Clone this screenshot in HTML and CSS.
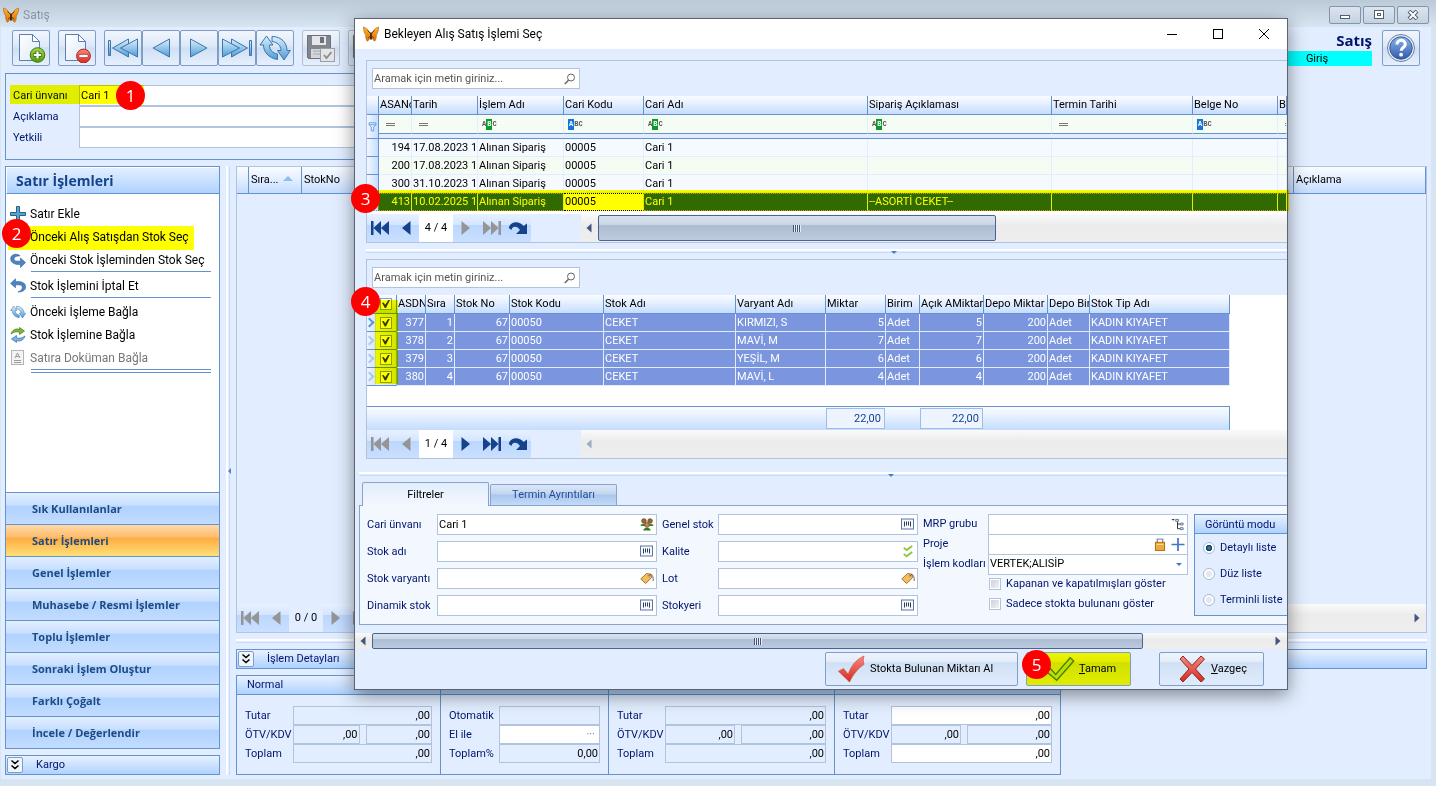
FILE: index.html
```html
<!DOCTYPE html>
<html lang="tr">
<head>
  <meta charset="UTF-8">
  <meta name="viewport" content="width=device-width, initial-scale=1.0">
  <title>Satış</title>
  <link rel="stylesheet" href="styles.css">
</head>
<body>
<svg class="defs" width="0" height="0" aria-hidden="true">
  <defs>
    <linearGradient id="gBlue" x1="0" y1="0" x2="0" y2="1"><stop offset="0" stop-color="#d9f1fb"/><stop offset="1" stop-color="#4f9bd6"/></linearGradient>
    <linearGradient id="gWing" x1="0" y1="0" x2="0" y2="1"><stop offset="0" stop-color="#ffb52e"/><stop offset="1" stop-color="#d9720c"/></linearGradient>
    <linearGradient id="gRed" x1="0" y1="0" x2="0" y2="1"><stop offset="0" stop-color="#f58a80"/><stop offset="1" stop-color="#d8291f"/></linearGradient>
    <linearGradient id="gGreen" x1="0" y1="0" x2="0" y2="1"><stop offset="0" stop-color="#a4d64a"/><stop offset="1" stop-color="#4e9a12"/></linearGradient>
    <linearGradient id="gHelp" x1="0" y1="0" x2="0" y2="1"><stop offset="0" stop-color="#8fb4ea"/><stop offset="1" stop-color="#2c5cae"/></linearGradient>
    <linearGradient id="gPage" x1="0" y1="0" x2="1" y2="1"><stop offset="0" stop-color="#ffffff"/><stop offset="1" stop-color="#dde9f8"/></linearGradient>
  </defs>
  <symbol id="butterfly" viewBox="0 0 16 16">
    <path d="M7.500 8C6.500 5 3.500 1.500 .4 1C.3 3.500 1.200 7.500 2.800 9C2.300 10.500 2.800 13 4.200 15.200C5.800 14.500 7.200 12.500 7.700 10z" fill="url(#gWing)" stroke="#9a560c" stroke-width=".5"/>
    <path d="M8.500 8C9.500 5 12.500 1.500 15.600 1C15.700 3.500 14.800 7.500 13.200 9C13.700 10.500 13.200 13 11.800 15.200C10.200 14.500 8.800 12.500 8.300 10z" fill="url(#gWing)" stroke="#9a560c" stroke-width=".5"/>
    <path d="M8 6.500v7" stroke="#3a1d03" stroke-width="1.800"/>
    <path d="M8 8L4.500 4.500M8 8l3.500-3.500M8 9.500L5 12M8 9.500l3 2.500" stroke="#6b3806" stroke-width=".9" fill="none"/>
  </symbol>
  <symbol id="page" viewBox="0 0 30 30">
    <path d="M3.500 1.500h13l7 7v19h-20z" fill="url(#gPage)" stroke="#5c7db5"/>
    <path d="M16.500 1.500l7 7h-7z" fill="#fff" stroke="#5c7db5"/>
  </symbol>
  <symbol id="pageAdd" viewBox="0 0 30 30">
    <use href="#page"/>
    <circle cx="21.500" cy="22" r="7.300" fill="url(#gGreen)" stroke="#3f7a10"/>
    <path d="M21.500 18v8M17.500 22h8" stroke="#3f7a10" stroke-width="4"/><path d="M21.500 18.500v7M18 22h7" stroke="#fff" stroke-width="2.200"/>
  </symbol>
  <symbol id="pageDel" viewBox="0 0 30 30">
    <use href="#page"/>
    <circle cx="21.500" cy="23" r="6.900" fill="url(#gRed)" stroke="#b3271f"/>
    <rect x="17" y="21.500" width="9" height="3" fill="#fff" stroke="#b3271f" stroke-width=".6"/>
  </symbol>
  <symbol id="first" viewBox="0 0 32 24">
    <g fill="url(#gBlue)" stroke="#3d74b0"><path d="M1.500 4.500h2v15h-2z"/><path d="M21.500 3v18L5.500 12z"/><path d="M30.500 3v18L13.500 12z"/></g>
  </symbol>
  <symbol id="prev" viewBox="0 0 20 24"><path d="M18.500 3v18L2 12z" fill="url(#gBlue)" stroke="#3d74b0"/></symbol>
  <symbol id="next" viewBox="0 0 20 24"><path d="M1.500 3v18L18 12z" fill="url(#gBlue)" stroke="#3d74b0"/></symbol>
  <symbol id="last" viewBox="0 0 32 24">
    <g fill="url(#gBlue)" stroke="#3d74b0"><path d="M28.500 4.500h2v15h-2z"/><path d="M10.500 3v18L26.500 12z"/><path d="M1.500 3v18L18.500 12z"/></g>
  </symbol>
  <symbol id="refresh" viewBox="0 0 32 26">
    <path d="M7.500 1L1 10h3.500c0 7 5 13 14 14.500v-5.500c-5-1-8-4-8-9H14z" fill="url(#gBlue)" stroke="#3d74b0"/>
    <path d="M25 25L31.300 15.500H28C28 8 22.500 1.500 13 1.500v5c5 .5 9 4 9 9h-3.500z" fill="url(#gBlue)" stroke="#3d74b0"/>
  </symbol>
  <symbol id="save" viewBox="0 0 30 30">
    <path d="M1.500 2.500h23v23h-22l-1-1z" fill="#82868c" stroke="#6d7177"/>
    <rect x="6" y="3" width="14" height="9" fill="#e4e6e9"/><rect x="14" y="4" width="4" height="6" fill="#6d7177"/>
    <rect x="5" y="16" width="16" height="9" fill="#d3d6da"/><path d="M7 18h12M7 21h12" stroke="#a5a9ae"/>
    <rect x="14.500" y="15.500" width="14" height="13" fill="#e2e4e6" stroke="#9a9da2"/>
    <path d="M18 22l2.500 3 5-6" fill="none" stroke="#8a8d92" stroke-width="1.800"/>
  </symbol>
  <symbol id="help" viewBox="0 0 30 30">
    <circle cx="15" cy="15" r="13.500" fill="#e4ecf8" stroke="#6c7f9e"/>
    <circle cx="15" cy="15" r="11.200" fill="url(#gHelp)" stroke="#36599a"/>
    <path d="M11 11.500c0-5.500 8.300-5.500 8.300-.3 0 3.300-4.200 3.200-4.200 6.600" fill="none" stroke="#fff" stroke-width="3"/>
    <circle cx="15.100" cy="21.700" r="1.900" fill="#fff"/>
  </symbol>
  <symbol id="plus" viewBox="0 0 16 16"><path d="M6.500 .5h3v6h6v3h-6v6h-3v-6h-6v-3h6z" fill="#4fa6cf" stroke="#2b5f86"/></symbol>
  <symbol id="redo" viewBox="0 0 16 16"><path d="M10.500 15.500l5-5-5-4.500v3c-4 .5-6.500 0-6.500-2 0-2.500 3.500-3.500 6-3C9 1.500 1 1 .7 6.500.5 11 5 12.800 10.500 12.500z" fill="#4a84c4" stroke="#33639c" stroke-width=".6"/></symbol>
  <symbol id="undo" viewBox="0 0 16 16"><path d="M5.500 .8L.6 5.500l4.900 4.300V7c4-.5 6.800 0 6.800 2.500 0 2-1.500 3.300-4.300 4.500 4.500.2 7.600-1.800 7.600-5.200 0-4.300-4.600-5.600-10.100-5.100z" fill="#4a84c4" stroke="#33639c" stroke-width=".6"/></symbol>
  <symbol id="swap" viewBox="0 0 16 16">
    <path d="M1 7C2 3 6 1 9.500 2.500V.5L14.500 4l-5 3.500v-2C6.500 4 4 5 1 7z" fill="#79b933" stroke="#46771a" stroke-width=".7"/>
    <path d="M15 9c-1 4-5 6-8.500 4.500v2L1.500 12l5-3.500v2c3 1.500 5.500.5 8.500-1.500z" fill="#7ab0e6" stroke="#396eaa" stroke-width=".7"/>
  </symbol>
  <symbol id="doc" viewBox="0 0 16 16">
    <rect x="1.500" y=".5" width="12" height="14" fill="#f4f4f4" stroke="#b5b5b5"/>
    <path d="M5 8l2.500-5L10 8M5.800 6.500h3.400M4 10.500h7M4 12.500h7" stroke="#9a9a9a" fill="none"/>
  </symbol>
  <symbol id="navFirst" viewBox="0 0 20 16"><path d="M1 1h2.500v14H1zM11 1v14L3.500 8zM19 1v14l-8-7z"/></symbol>
  <symbol id="navPrev" viewBox="0 0 10 16"><path d="M9.500 1v14L1 8z"/></symbol>
  <symbol id="navNext" viewBox="0 0 10 16"><path d="M.5 1v14L9 8z"/></symbol>
  <symbol id="navLast" viewBox="0 0 20 16"><path d="M16.500 1H19v14h-2.500zM9 1v14l7.500-7zM1 1v14l8-7z"/></symbol>
  <symbol id="navJump" viewBox="0 0 20 16"><path d="M.8 8C2 1.500 11 0 15.500 6L19 3.500V14H8l4-4C9.500 5.500 4 5.500 3.500 10z"/></symbol>
  <symbol id="lens" viewBox="0 0 12 12"><circle cx="7" cy="4.500" r="3.500" fill="none" stroke="#666"/><path d="M4.500 7.200L.8 11" stroke="#666" stroke-width="1.500"/></symbol>
  <symbol id="funnel" viewBox="0 0 9 10"><path d="M1 .8h7v2L5.700 5v4H3.300V5L1 2.800zM1 2.800h7" fill="none" stroke="#6fa3e4"/></symbol>
  <symbol id="people" viewBox="0 0 14 14">
    <path d="M0 8.500c0-3 6-3 6 0zM8 8.500c0-3 6-3 6 0z" fill="#3f8a2c"/>
    <circle cx="3.700" cy="3.200" r="2.500" fill="#9a6636" stroke="#5e3a17" stroke-width=".7"/><circle cx="10.300" cy="3.200" r="2.500" fill="#9a6636" stroke="#5e3a17" stroke-width=".7"/>
    <path d="M3 13.500c0-4 8-4 8 0z" fill="#2f7a24"/><circle cx="7" cy="7.500" r="2.600" fill="#c08a52" stroke="#5e3a17" stroke-width=".7"/>
  </symbol>
  <symbol id="barcode" viewBox="0 0 14 12"><rect x=".5" y=".5" width="12" height="10" fill="#f4f8ff" stroke="#5f74a8"/><path d="M3.500 3v5M5.500 3v4M7.500 3v4M9.500 3v5" stroke="#333a50"/></symbol>
  <symbol id="tag" viewBox="0 0 14 12"><path d="M.8 6.500L6.500 1l4.300.7.8 3.500-6 5.800z" fill="#f6bd5e" stroke="#9b6a22" stroke-width=".9"/><circle cx="9" cy="3.500" r="1" fill="#fff" stroke="#7a5010" stroke-width=".5"/><path d="M9 3.500c2-4 5 .5 4 5" fill="none" stroke="#555" stroke-width=".9"/></symbol>
  <symbol id="checks" viewBox="0 0 12 14"><path d="M1.500 3l3 2.500L10.500 1M1.500 9.500l3 2.700L10.500 7.500" fill="none" stroke="#8cc63f" stroke-width="2"/></symbol>
  <symbol id="tree" viewBox="0 0 14 14"><path d="M0 1h3.500L1.800 3z" fill="#333"/><path d="M4.500 1.500h3v2h-3zM9.500 5.500h3v2h-3zM9.500 10.500h3v2h-3z" fill="#fff" stroke="#5a6a90"/><path d="M6.500 4v7.500H9M6.500 6.500H9" fill="none" stroke="#222"/></symbol>
  <symbol id="lock" viewBox="0 0 10 12"><path d="M2.500 5V1h5v4" fill="none" stroke="#8a93a5" stroke-width="1.300"/><rect x=".8" y="4" width="8.400" height="7.500" fill="#f0a93c" stroke="#b06f14" stroke-width=".9"/><path d="M2 6h6" stroke="#ffdd95"/></symbol>
  <symbol id="thinPlus" viewBox="0 0 12 12"><path d="M6 0v12M0 6h12" stroke="#3f78c4" stroke-width="1.600"/></symbol>
  <symbol id="redCheck" viewBox="0 0 30 30"><path d="M1.500 17.500L7 14.500l5 6C15 12 20 5 29 1c-1 3-1 6 0 9C23 14 17 21 13.500 29z" fill="url(#gRed)" stroke="#c9463d" stroke-width=".6"/></symbol>
  <symbol id="okCheck" viewBox="0 0 28 24"><path d="M1.500 14.500l3.500-3 5 5.500L23.500 1.500l3.300 3L11 22.500z" fill="#b9e070" stroke="#4c7f1e" stroke-width="1.300"/></symbol>
  <symbol id="redX" viewBox="0 0 28 28"><path d="M2 4l3-3 9 9.500L23 1l3.500 3-9 10 9 10-3.500 3-9-9.500L5 27l-3-3 9-10z" fill="url(#gRed)" stroke="#8c2a22"/></symbol>
  <symbol id="chev" viewBox="0 0 10 12"><path d="M1.500 1.500L5 4.500l3.500-3M1.500 6.500L5 9.500l3.500-3" fill="none" stroke="#000" stroke-width="1.600"/></symbol>
  <symbol id="arrL" viewBox="0 0 6 10"><path d="M5.500 .5v9L.5 5z"/></symbol>
  <symbol id="arrR" viewBox="0 0 6 10"><path d="M.5 .5v9l5-4.500z"/></symbol>
</svg>

<main class="window">
  <header class="titlebar">
    <svg class="logo"><use href="#butterfly"/></svg>
    <span class="window-name">Satış</span>
    <div class="window-controls">
      <button aria-label="Küçült"><svg viewBox="0 0 12 10"><rect x="1.500" y="5.500" width="9" height="3" fill="#fff" stroke="#555c6b"/></svg></button>
      <button aria-label="Ekranı kapla"><svg viewBox="0 0 12 10"><rect x="1.500" y=".5" width="9" height="8" fill="#fff" stroke="#555c6b"/><rect x="4.500" y="3.500" width="3" height="2" fill="none" stroke="#555c6b"/></svg></button>
      <button aria-label="Kapat"><svg viewBox="0 0 12 10"><path d="M2 1l8 8M10 1L2 9" stroke="#555c6b" stroke-width="4"/><path d="M2.500 1.500l7 7M9.500 1.500l-7 7" stroke="#fff" stroke-width="2"/></svg></button>
    </div>
  </header>

  <div class="client">
    <div class="toolbar">
      <button class="tool" aria-label="Yeni"><svg class="i30"><use href="#pageAdd"/></svg></button>
      <button class="tool" aria-label="Sil"><svg class="i30"><use href="#pageDel"/></svg></button>
      <div class="tool-group">
        <button class="tool" aria-label="İlk"><svg class="i32"><use href="#first"/></svg></button>
        <button class="tool" aria-label="Önceki"><svg class="i20"><use href="#prev"/></svg></button>
        <button class="tool" aria-label="Sonraki"><svg class="i20"><use href="#next"/></svg></button>
        <button class="tool" aria-label="Son"><svg class="i32"><use href="#last"/></svg></button>
        <button class="tool" aria-label="Yenile"><svg class="i32"><use href="#refresh"/></svg></button>
      </div>
      <button class="tool off" aria-label="Kaydet" disabled><svg class="i30"><use href="#save"/></svg></button>
      <button class="tool off" aria-label="Kaydet ve kapat" disabled><svg class="i30"><use href="#save"/></svg></button>
      <div class="status">
        <strong>Satış</strong>
        <span>Giriş</span>
      </div>
      <button class="tool" aria-label="Yardım"><svg class="i30"><use href="#help"/></svg></button>
    </div>

    <section class="account">
      <label for="unvan">Cari ünvanı</label><input id="unvan" value="Cari 1">
      <label for="aciklama">Açıklama</label><input id="aciklama">
      <label for="yetkili">Yetkili</label><input id="yetkili">
    </section>

    <div class="columns">
      <aside class="side">
        <nav class="side-panel">
          <h2>Satır İşlemleri</h2>
          <ul class="actions">
            <li><a href="#"><svg><use href="#plus"/></svg>Satır Ekle</a></li>
            <li><a href="#"><svg><use href="#redo"/></svg>Önceki Alış Satışdan Stok Seç</a></li>
            <li class="line"><a href="#"><svg><use href="#redo"/></svg>Önceki Stok İşleminden Stok Seç</a></li>
            <li class="line"><a href="#"><svg><use href="#undo"/></svg>Stok İşlemini İptal Et</a></li>
            <li><a href="#"><svg viewBox="0 0 32 26"><use href="#refresh"/></svg>Önceki İşleme Bağla</a></li>
            <li><a href="#"><svg><use href="#swap"/></svg>Stok İşlemine Bağla</a></li>
            <li class="line double"><a href="#" class="off"><svg><use href="#doc"/></svg>Satıra Doküman Bağla</a></li>
          </ul>
          <div class="groups">
            <button>Sık Kullanılanlar</button>
            <button class="active">Satır İşlemleri</button>
            <button>Genel İşlemler</button>
            <button>Muhasebe / Resmi İşlemler</button>
            <button>Toplu İşlemler</button>
            <button>Sonraki İşlem Oluştur</button>
            <button>Farklı Çoğalt</button>
            <button>İncele / Değerlendir</button>
          </div>
        </nav>
        <div class="expander"><button aria-label="Kargo aç"><svg><use href="#chev"/></svg></button>Kargo</div>
      </aside>

      <div class="split-v"><svg viewBox="0 0 3 6"><path d="M3 0v6L0 3z"/></svg></div>

      <div class="work">
        <section class="lines">
          <table class="grid lines-table">
            <colgroup><col class="w12"><col class="w53"><col><col class="w132"></colgroup>
            <thead><tr><th></th><th>Sıra... <i class="sort"></i></th><th>StokNo</th><th>Açıklama</th></tr></thead>
          </table>
          <div class="pager">
            <div class="nav">
              <button disabled aria-label="İlk"><svg class="wide"><use href="#navFirst"/></svg></button>
              <button disabled aria-label="Önceki"><svg><use href="#navPrev"/></svg></button>
              <span class="plain">0 / 0</span>
              <button disabled aria-label="Sonraki"><svg><use href="#navNext"/></svg></button>
              <button disabled aria-label="Son"><svg class="wide"><use href="#navLast"/></svg></button>
            </div>
            <div class="scroll"><svg class="arr"><use href="#arrL"/></svg><span class="rest"></span><svg class="arr"><use href="#arrR"/></svg></div>
          </div>
        </section>
        <div class="split-h"></div>
        <div class="expander"><button aria-label="İşlem Detayları aç"><svg><use href="#chev"/></svg></button>İşlem Detayları</div>
        <div class="totals">
          <fieldset class="total t1">
            <legend>Normal</legend>
            <label for="n1">Tutar</label><input id="n1" value=",00" readonly>
            <label for="n2">ÖTV/KDV</label><div class="pair"><input id="n2" value=",00" readonly><input aria-label="KDV" value=",00" readonly></div>
            <label for="n3">Toplam</label><input id="n3" value=",00" readonly>
          </fieldset>
          <fieldset class="total t2">
            <legend>İskonto</legend>
            <label for="i1">Otomatik</label><input id="i1" readonly>
            <label for="i2">El ile</label><input id="i2" class="edit dots" placeholder="···">
            <label for="i3">Toplam%</label><input id="i3" value="0,00" readonly>
          </fieldset>
          <fieldset class="total t3">
            <legend>Net</legend>
            <label for="k1">Tutar</label><input id="k1" value=",00" readonly>
            <label for="k2">ÖTV/KDV</label><div class="pair"><input id="k2" value=",00" readonly><input aria-label="KDV" value=",00" readonly></div>
            <label for="k3">Toplam</label><input id="k3" value=",00" readonly>
          </fieldset>
          <fieldset class="total t3">
            <legend>İşlem</legend>
            <label for="s1">Tutar</label><input id="s1" class="edit" value=",00">
            <label for="s2">ÖTV/KDV</label><div class="pair"><input id="s2" value=",00" readonly><input aria-label="KDV" value=",00" readonly></div>
            <label for="s3">Toplam</label><input id="s3" class="edit" value=",00">
          </fieldset>
        </div>
      </div>
    </div>
  </div>
</main>

<div class="dialog" role="dialog" aria-labelledby="dialogTitle">
  <header class="dialog-title">
    <svg class="logo"><use href="#butterfly"/></svg>
    <h1 id="dialogTitle">Bekleyen Alış Satış İşlemi Seç</h1>
    <div class="dialog-controls">
      <button aria-label="Küçült"><svg viewBox="0 0 12 12"><path d="M1 6.500h10" stroke="#000"/></svg></button>
      <button aria-label="Ekranı kapla"><svg viewBox="0 0 12 12"><rect x="1.500" y="1.500" width="9" height="9" fill="none" stroke="#000"/></svg></button>
      <button aria-label="Kapat"><svg viewBox="0 0 12 12"><path d="M1 1l10 10M11 1L1 11" stroke="#000"/></svg></button>
    </div>
  </header>

  <section class="list">
    <div class="search"><input type="text" aria-label="Siparişlerde ara" placeholder="Aramak için metin giriniz..."><svg><use href="#lens"/></svg></div>
    <table class="grid orders">
      <colgroup><col class="w12"><col class="w33"><col class="w66"><col class="w86"><col class="w80"><col class="w224"><col class="w184"><col class="w141"><col class="w85"><col></colgroup>
      <thead>
        <tr><th></th><th>ASANo</th><th>Tarih</th><th>İşlem Adı</th><th>Cari Kodu</th><th>Cari Adı</th><th>Sipariş Açıklaması</th><th>Termin Tarihi</th><th>Belge No</th><th>Be</th></tr>
        <tr class="filter">
          <td class="ind" rowspan="2"><svg><use href="#funnel"/></svg></td>
          <td><i class="eq"></i></td><td><i class="eq"></i></td>
          <td><span class="abc">A<b class="green">B</b>C</span></td>
          <td><span class="abc"><b class="blue">A</b>BC</span></td>
          <td><span class="abc">A<b class="green">B</b>C</span></td>
          <td><span class="abc">A<b class="green">B</b>C</span></td>
          <td><i class="eq"></i></td>
          <td><span class="abc"><b class="blue">A</b>BC</span></td>
          <td><i class="eq"></i></td>
        </tr>
        <tr class="band"><td colspan="9"></td></tr>
      </thead>
      <tbody>
        <tr><td class="ind"></td><td class="num">194</td><td>17.08.2023 1</td><td>Alınan Sipariş</td><td>00005</td><td>Cari 1</td><td></td><td></td><td></td><td></td></tr>
        <tr class="alt"><td class="ind"></td><td class="num">200</td><td>17.08.2023 1</td><td>Alınan Sipariş</td><td>00005</td><td>Cari 1</td><td></td><td></td><td></td><td></td></tr>
        <tr><td class="ind"></td><td class="num">300</td><td>31.10.2023 1</td><td>Alınan Sipariş</td><td>00005</td><td>Cari 1</td><td></td><td></td><td></td><td></td></tr>
        <tr class="selected"><td class="ind"></td><td class="num">413</td><td>10.02.2025 1</td><td>Alınan Sipariş</td><td class="focus">00005</td><td>Cari 1</td><td>--ASORTİ CEKET--</td><td></td><td></td><td></td></tr>
      </tbody>
    </table>
    <div class="pager top-gap">
      <div class="nav">
        <button aria-label="İlk"><svg class="wide"><use href="#navFirst"/></svg></button>
        <button aria-label="Önceki"><svg><use href="#navPrev"/></svg></button>
        <span>4 / 4</span>
        <button disabled aria-label="Sonraki"><svg><use href="#navNext"/></svg></button>
        <button disabled aria-label="Son"><svg class="wide"><use href="#navLast"/></svg></button>
        <button aria-label="Git"><svg class="wide"><use href="#navJump"/></svg></button>
      </div>
      <div class="scroll"><svg class="arr"><use href="#arrL"/></svg><span class="thumb"><i></i></span><span class="rest"></span></div>
    </div>
  </section>

  <div class="split-h mid"><i></i></div>

  <section class="list">
    <div class="search"><input type="text" aria-label="Stoklarda ara" placeholder="Aramak için metin giriniz..."><svg><use href="#lens"/></svg></div>
    <div class="sheet">
      <table class="grid stocks">
        <colgroup><col class="w9"><col class="w21"><col class="w29"><col class="w29"><col class="w55"><col class="w94"><col class="w132"><col class="w90"><col class="w60"><col class="w34"><col class="w64"><col class="w64"><col class="w42"><col class="w140"></colgroup>
        <thead>
          <tr><th class="open"></th><th class="tick"><input type="checkbox" aria-label="Tümünü seç" checked></th><th>ASDNo</th><th>Sıra</th><th>Stok No</th><th>Stok Kodu</th><th>Stok Adı</th><th>Varyant Adı</th><th>Miktar</th><th>Birim</th><th>Açık AMiktar</th><th>Depo Miktar</th><th>Depo Birim</th><th>Stok Tip Adı</th></tr>
        </thead>
        <tbody>
          <tr><td class="ind current"></td><td class="tick"><input type="checkbox" aria-label="377" checked></td><td class="num">377</td><td class="num">1</td><td class="num">67</td><td>00050</td><td>CEKET</td><td>KIRMIZI, S</td><td class="num">5</td><td>Adet</td><td class="num">5</td><td class="num">200</td><td>Adet</td><td>KADIN KIYAFET</td></tr>
          <tr><td class="ind"></td><td class="tick"><input type="checkbox" aria-label="378" checked></td><td class="num">378</td><td class="num">2</td><td class="num">67</td><td>00050</td><td>CEKET</td><td>MAVİ, M</td><td class="num">7</td><td>Adet</td><td class="num">7</td><td class="num">200</td><td>Adet</td><td>KADIN KIYAFET</td></tr>
          <tr><td class="ind"></td><td class="tick"><input type="checkbox" aria-label="379" checked></td><td class="num">379</td><td class="num">3</td><td class="num">67</td><td>00050</td><td>CEKET</td><td>YEŞİL, M</td><td class="num">6</td><td>Adet</td><td class="num">6</td><td class="num">200</td><td>Adet</td><td>KADIN KIYAFET</td></tr>
          <tr><td class="ind"></td><td class="tick"><input type="checkbox" aria-label="380" checked></td><td class="num">380</td><td class="num">4</td><td class="num">67</td><td>00050</td><td>CEKET</td><td>MAVİ, L</td><td class="num">4</td><td>Adet</td><td class="num">4</td><td class="num">200</td><td>Adet</td><td>KADIN KIYAFET</td></tr>
        </tbody>
        <tfoot>
          <tr><td colspan="8"></td><td><output>22,00</output></td><td></td><td><output>22,00</output></td><td colspan="3"></td></tr>
        </tfoot>
      </table>
    </div>
    <div class="pager">
      <div class="nav">
        <button disabled aria-label="İlk"><svg class="wide"><use href="#navFirst"/></svg></button>
        <button disabled aria-label="Önceki"><svg><use href="#navPrev"/></svg></button>
        <span>1 / 4</span>
        <button aria-label="Sonraki"><svg><use href="#navNext"/></svg></button>
        <button aria-label="Son"><svg class="wide"><use href="#navLast"/></svg></button>
        <button aria-label="Git"><svg class="wide"><use href="#navJump"/></svg></button>
      </div>
      <div class="scroll faded"><svg class="arr"><use href="#arrL"/></svg><span class="rest"></span></div>
    </div>
  </section>

  <div class="split-h low"><i></i></div>

  <div class="tabs" role="tablist">
    <button role="tab" aria-selected="true" class="on">Filtreler</button>
    <button role="tab" aria-selected="false">Termin Ayrıntıları</button>
  </div>
  <section class="filters">
    <div class="fields f1">
      <label for="f1">Cari ünvanı</label><div class="field"><input id="f1" value="Cari 1"><svg><use href="#people"/></svg></div>
      <label for="f2">Stok adı</label><div class="field"><input id="f2"><svg><use href="#barcode"/></svg></div>
      <label for="f3">Stok varyantı</label><div class="field"><input id="f3"><svg><use href="#tag"/></svg></div>
      <label for="f4">Dinamik stok</label><div class="field"><input id="f4"><svg><use href="#barcode"/></svg></div>
    </div>
    <div class="fields f2">
      <label for="g1">Genel stok</label><div class="field"><input id="g1"><svg><use href="#barcode"/></svg></div>
      <label for="g2">Kalite</label><div class="field"><input id="g2"><svg><use href="#checks"/></svg></div>
      <label for="g3">Lot</label><div class="field"><input id="g3"><svg><use href="#tag"/></svg></div>
      <label for="g4">Stokyeri</label><div class="field"><input id="g4"><svg><use href="#barcode"/></svg></div>
    </div>
    <div class="fields f3">
      <label for="m1">MRP grubu</label><div class="field"><input id="m1"><svg><use href="#tree"/></svg></div>
      <label for="m2">Proje</label><div class="field"><input id="m2"><svg><use href="#lock"/></svg><svg><use href="#thinPlus"/></svg></div>
      <label for="m3">İşlem kodları</label><div class="field"><select id="m3"><option>VERTEK;ALISİP</option></select></div>
      <label class="opt"><input type="checkbox">Kapanan ve kapatılmışları göster</label>
      <label class="opt"><input type="checkbox">Sadece stokta bulunanı göster</label>
    </div>
    <fieldset class="mode">
      <legend>Görüntü modu</legend>
      <label><input type="radio" name="mode" checked>Detaylı liste</label>
      <label><input type="radio" name="mode">Düz liste</label>
      <label><input type="radio" name="mode">Terminli liste</label>
    </fieldset>
  </section>

  <div class="scroll low-scroll"><svg class="arr"><use href="#arrL"/></svg><span class="thumb"><i></i></span><span class="rest"></span><svg class="arr"><use href="#arrR"/></svg></div>

  <footer class="buttons">
    <button class="big stock"><svg><use href="#redCheck"/></svg>Stokta Bulunan Miktarı Al</button>
    <button class="big ok"><svg><use href="#okCheck"/></svg><span><u>T</u>amam</span></button>
    <button class="big cancel"><svg><use href="#redX"/></svg><span><u>V</u>azgeç</span></button>
  </footer>
</div>

<!-- step markers -->
<div class="mark mark-1"></div>
<div class="mark mark-2"></div>
<div class="mark mark-3"></div>
<div class="mark mark-4"></div>
<div class="mark mark-5"></div>
<span class="step step-1">1</span>
<span class="step step-2">2</span>
<span class="step step-3">3</span>
<span class="step step-4">4</span>
<span class="step step-5">5</span>
</body>
</html>
```
FILE: styles.css
```css
:root {
  --face: #e2eeff;
  --frame: #d7e4f1;
  --line: #6593cf;
  --soft-line: #b0c4de;
  --label: #00156e;
  --nav: #15428b;
  --head: linear-gradient(#fafcff, #e4efff 45%, #c4dcff);
  --ind: linear-gradient(90deg, #f4f8ff, #c4dcff);
}

*, *::before, *::after {
  box-sizing: border-box;
}

body {
  margin: 0;
  min-height: 100vh;
  position: relative;
  overflow: hidden;
  background: var(--frame);
  color: #000;
  font-family: Tahoma, Roboto, "Noto Sans", sans-serif;
  font-size: 11px;
  line-height: 16px;
}

button, input, select {
  font: inherit;
  color: inherit;
  margin: 0;
  padding: 0;
}

button {
  cursor: pointer;
}

svg {
  display: block;
  flex: none;
}

.defs {
  position: absolute;
}

fieldset {
  margin: 0;
  padding: 0;
  border: 0;
  min-width: 0;
}

/* main window */
.window {
  display: flex;
  flex-direction: column;
  min-height: 100vh;
}

.titlebar {
  display: flex;
  align-items: center;
  height: 27px;
  padding: 3px 7px 0 3px;
  background: linear-gradient(#bccad8, #d7e4f1);
}

.logo {
  width: 16px;
  height: 16px;
}

.window-name {
  margin-left: 4px;
  font-size: 12px;
  color: #8a95a3;
}

.window-controls {
  display: flex;
  gap: 2px;
  margin-left: auto;
}

.window-controls button {
  display: grid;
  place-items: center;
  width: 32px;
  height: 18px;
  border: 1px solid #8494ab;
  border-radius: 2px;
  background: linear-gradient(#dbe5ef, #c4d2e0);
}

.window-controls svg {
  width: 12px;
  height: 10px;
}

.client {
  flex: 1;
  display: flex;
  flex-direction: column;
  margin: 0 5px 7px 1px;
  padding-bottom: 4px;
  background: var(--face);
}

.toolbar {
  display: flex;
  gap: 8px;
  padding: 3px 11px 0;
}

.tool-group {
  display: flex;
}

.tool {
  display: grid;
  place-items: center;
  width: 38px;
  height: 36px;
  border: 1px solid #7f9dc6;
  border-radius: 2px;
  background: linear-gradient(#f1f6fd, #dde9f8 45%, #cfdff3 50%, #e6f0fd);
}

.tool.off {
  border-color: #b3bfcf;
}

.i30 {
  width: 30px;
  height: 30px;
}

.i32 {
  width: 32px;
  height: 26px;
}

.i20 {
  width: 20px;
  height: 24px;
}

.status {
  display: flex;
  flex-direction: column;
  width: 110px;
  margin: 0 2px 0 auto;
  text-align: right;
}

.status strong {
  font: bold 15px/21px Tahoma, "Open Sans", sans-serif;
  color: var(--label);
}

.status span {
  background: #0ff;
  line-height: 15px;
  text-align: center;
}

.account {
  display: grid;
  grid-template-columns: 66px 1fr;
  align-items: center;
  width: 75%;
  margin: 7px 0 6px 4px;
  padding: 11px 7px;
  border: 1px solid var(--line);
  color: var(--label);
}

.account input, .total input {
  min-width: 0;
  width: 100%;
  border: 1px solid var(--soft-line);
  border-radius: 0;
  background: #fff;
  color: #000;
}

.account input {
  height: 21px;
  padding-left: 1px;
}

.columns {
  flex: 1;
  display: flex;
  padding: 0 4px;
}

.side {
  display: flex;
  flex-direction: column;
  gap: 6px;
  width: 215px;
}

.side-panel {
  flex: 1;
  display: flex;
  flex-direction: column;
  border: 1px solid var(--line);
  background: #fff;
}

.side-panel h2 {
  margin: 0;
  padding-left: 9px;
  border: solid #fff;
  border-width: 1px 0 0 1px;
  border-bottom: 1px solid var(--line);
  background: linear-gradient(#e3efff, #afd2ff);
  color: var(--nav);
  font: bold 14px/25px Tahoma, "Open Sans", sans-serif;
}

.actions {
  flex: 1;
  list-style: none;
  margin: 0;
  padding: 8px 8px 0 4px;
}

.actions a {
  display: flex;
  align-items: center;
  gap: 4px;
  height: 23px;
  font-size: 12px;
  color: #000;
  text-decoration: none;
  white-space: nowrap;
}

.actions svg {
  width: 16px;
  height: 16px;
}

.actions .off {
  color: #777;
}

.line::after {
  content: "";
  display: block;
  height: 3px;
  margin-left: 21px;
  border-top: 1px solid var(--line);
}

.double::after {
  height: 4px;
  border-bottom: 1px solid var(--line);
}

.groups button {
  display: block;
  width: 100%;
  height: 32px;
  padding-left: 26px;
  border: 0;
  border-top: 1px solid var(--line);
  background: linear-gradient(#e3efff, #c7dfff 40%, #afd2ff 41%, #c2dcff);
  color: #1f4b85;
  font: bold 11px/16px Tahoma, "Open Sans", sans-serif;
  text-align: left;
}

.groups .active {
  background: linear-gradient(#ffd9a9, #ffbc69 40%, #ffab3f 41%, #fee07a);
}

.expander {
  display: flex;
  align-items: center;
  height: 20px;
  border: 1px solid var(--line);
  background: linear-gradient(#e8f1ff, #afd2ff);
  color: var(--label);
}

.expander button {
  display: grid;
  place-items: center;
  width: 16px;
  height: 16px;
  margin: 0 13px 0 1px;
  border: 1px solid #7f9dc6;
  border-radius: 2px;
  background: #eef4fc;
}

.expander svg {
  width: 10px;
  height: 12px;
}

.split-v {
  display: flex;
  align-items: center;
  width: 4px;
  margin: 0 6px;
  border-left: 2px solid #fff;
  border-right: 1px solid #c4dcff;
}

.split-v svg {
  width: 3px;
  height: 6px;
  fill: #5580bb;
}

.work {
  flex: 1;
  min-width: 0;
  display: flex;
  flex-direction: column;
}

.lines {
  flex: 1;
  display: flex;
  flex-direction: column;
  justify-content: space-between;
  border: 1px solid var(--soft-line);
}

.split-h {
  height: 4px;
  margin: 6px 0;
  border-top: 2px solid #fff;
  border-bottom: 1px solid #c4dcff;
}

.split-h i {
  display: block;
  width: 6px;
  margin-left: 57%;
  border: solid transparent;
  border-width: 3px 3px 0;
  border-top-color: #4d7ebf;
}

/* grids */
.grid {
  border-spacing: 0;
  table-layout: fixed;
  width: 100%;
}

.grid th, .grid td {
  height: 18px;
  padding: 0 1px;
  overflow: hidden;
  white-space: nowrap;
  line-height: 16px;
  text-align: left;
  font-weight: normal;
}

.grid th {
  height: 19px;
  border-right: 1px solid var(--line);
  border-bottom: 1px solid var(--line);
  background: var(--head);
}

.grid td {
  border-right: 1px solid var(--face);
  border-bottom: 1px solid var(--face);
}

.grid .num {
  text-align: right;
}

.lines-table th {
  height: 27px;
  padding-left: 2px;
}

.sort {
  display: inline-block;
  margin-left: 2px;
  border: solid transparent;
  border-width: 0 5px 5px;
  border-bottom-color: #8fbcf5;
  vertical-align: 2px;
}

.orders tbody td {
  background: #f5faff;
}

.orders .filter td, .orders .alt td {
  background: #f5fcf3;
}

.orders .selected td {
  background: #316ac5;
  color: #fff;
  border-top: 1px dotted #d09a40;
  border-bottom: 1px dotted #d09a40;
}

.orders .selected .focus {
  background: #fff;
  color: #000;
  border-top-color: #000;
  border-bottom-color: #000;
}

.orders .filter td {
  height: 19px;
  border-bottom-color: var(--line);
}

.orders .band td {
  height: 5px;
  border-right: 0;
  border-bottom: 1px solid var(--line);
  background: var(--face);
  line-height: 0;
}

.orders tr .ind.ind {
  border-right-color: var(--line);
  border-bottom-color: var(--line);
  background: var(--ind);
}

.ind svg {
  width: 9px;
  height: 10px;
}

.eq {
  display: block;
  width: 9px;
  height: 3px;
  margin-left: 6px;
  border: solid #777;
  border-width: 1px 0;
}

.abc {
  display: flex;
  align-items: center;
  margin-left: 3px;
  color: #555;
  font: bold 7px/11px "Liberation Mono", monospace;
}

.abc b {
  padding: 0 1px;
  color: #fff;
}

.green {
  background: #0a9a28;
}

.blue {
  background: #1177dd;
}

.stocks {
  width: 863px;
}

.grid .open {
  border-right: 0;
}

.stocks tbody td {
  background: #7b96df;
  color: #fff;
}

.stocks tbody .ind, .stocks tbody .tick {
  border-right-color: #8fb4e4;
  border-bottom-color: var(--line);
  background: linear-gradient(90deg, #eef5ff, #d2e4ff);
}

.stocks tbody .ind {
  border-right: 0;
}

.stocks .ind::before {
  content: "";
  display: block;
  width: 7px;
  height: 7px;
  margin-left: -2px;
  border: solid #a9c8f0;
  border-width: 2px 2px 0 0;
  transform: rotate(45deg);
}

.stocks .current::before {
  border-color: #5b93dd;
}

.tick input {
  display: block;
  margin: 0 auto;
}

input[type="checkbox"] {
  appearance: none;
  display: grid;
  place-items: center;
  flex: none;
  width: 12px;
  height: 12px;
  border: 1px solid #8ba0bc;
  background: #fff;
}

.tick input:checked::before {
  content: "";
  display: block;
  width: 8px;
  height: 8px;
  background: #2e3e5c;
  clip-path: polygon(0 35%, 20% 30%, 40% 60%, 80% 0, 100% 0, 50% 100%, 35% 100%);
}

.sheet {
  background: #fff;
}

.stocks tfoot::before {
  content: "";
  display: table-row;
  height: 20px;
}

.stocks tfoot td {
  height: 24px;
  padding: 0;
  border-top: 1px solid var(--line);
  border-right: 0;
  border-bottom: 0;
  background: var(--head);
}

.stocks tfoot td:last-child {
  border-right: 1px solid var(--line);
}

.stocks output {
  display: block;
  margin-right: 1px;
  padding-right: 3px;
  border: 1px solid #9dbde8;
  background: #edf4ff;
  color: var(--nav);
  line-height: 19px;
  text-align: right;
}

.w9 { width: 9px; }
.w12 { width: 12px; }
.w21 { width: 21px; }
.w29 { width: 29px; }
.w33 { width: 33px; }
.w34 { width: 34px; }
.w42 { width: 42px; }
.w53 { width: 53px; }
.w55 { width: 55px; }
.w60 { width: 60px; }
.w64 { width: 64px; }
.w66 { width: 66px; }
.w80 { width: 80px; }
.w85 { width: 85px; }
.w86 { width: 86px; }
.w90 { width: 90px; }
.w94 { width: 94px; }
.w132 { width: 132px; }
.w140 { width: 140px; }
.w141 { width: 141px; }
.w184 { width: 184px; }
.w224 { width: 224px; }

/* record navigator and scroll bars */
.pager {
  display: flex;
  height: 28px;
}

.top-gap {
  border-top: 3px solid #fff;
  height: 31px;
}

.nav {
  display: flex;
  margin-right: 50px;
  background: linear-gradient(#e8f1ff, #d3e5ff 40%, #bcd7ff 41%, #c9dfff);
}

.nav button {
  display: grid;
  place-items: center;
  width: 26px;
  border: 0;
  background: none;
  fill: var(--nav);
}

.nav button:disabled {
  fill: #959595;
}

.nav svg {
  width: 10px;
  height: 16px;
}

.nav .wide {
  width: 20px;
}

.nav span {
  width: 34px;
  background: #fff;
  line-height: 28px;
  text-align: center;
}

.nav .plain {
  background: var(--face);
}

.scroll {
  flex: 1;
  display: flex;
  align-items: center;
  background: linear-gradient(#fafafa, #ececec 40%, #eee);
  fill: #44567e;
}

.faded {
  fill: #9aa9c9;
}

.arr {
  width: 6px;
  height: 10px;
  margin: 0 6px 0 5px;
}

.thumb {
  display: grid;
  place-items: center;
  align-self: stretch;
  flex: 397;
  margin: 1px 0;
  border: 1px solid #4a6392;
  border-radius: 2px;
  background: linear-gradient(#d9e2ee, #cbd7e6 35%, #acbcd2 40%, #bdcbde);
}

.thumb i {
  width: 8px;
  height: 7px;
  background: repeating-linear-gradient(90deg, #46557a 0 1px, #e6edf7 1px 2px);
}

.rest {
  flex: 292;
}

/* totals */
.totals {
  display: flex;
  margin-top: 6px;
}

.total {
  display: grid;
  grid-template-columns: 48px 1fr;
  align-items: center;
  align-content: start;
  padding: 0 8px 11px;
  border: 1px solid var(--line);
  color: var(--label);
}

.total + .total {
  border-left: 0;
}

.total legend, .mode legend {
  float: left;
  grid-column: 1 / -1;
  border-bottom: 1px solid var(--line);
  background: linear-gradient(#e8f1ff, #afd2ff);
}

.total legend {
  margin: 0 -8px 11px;
  padding: 1px 10px;
}

.total input {
  height: 19px;
  background: var(--face);
  padding-right: 1px;
  text-align: right;
}

.total .edit {
  background: #fff;
}

.total .dots {
  padding-right: 4px;
}

.pair {
  display: grid;
  grid-template-columns: 1fr 1fr;
  gap: 6px;
}

.t1 {
  width: 205px;
}

.t2 {
  width: 168px;
  grid-template-columns: 50px 1fr;
}

.t3 {
  width: 226px;
}

.t3 .pair {
  grid-template-columns: 70px 1fr;
}

/* dialog */
.dialog {
  position: absolute;
  top: 18px;
  left: 354px;
  right: 148px;
  overflow: hidden;
  border: 1px solid #5b6470;
  background: var(--face);
  box-shadow: 0 5px 18px rgba(0, 0, 0, 0.45);
}

.dialog-title {
  display: flex;
  align-items: center;
  height: 30px;
  padding: 0 17px 0 8px;
  background: #fff;
}

.dialog-title h1 {
  margin: 0 auto 0 5px;
  font-size: 12px;
  font-weight: normal;
}

.dialog-controls {
  display: flex;
  gap: 34px;
}

.dialog-controls button {
  border: 0;
  background: none;
}

.dialog-controls svg {
  width: 12px;
  height: 12px;
}

.list {
  margin-left: 11px;
  border: 1px solid var(--soft-line);
  border-right: 0;
}

.dialog-title + .list {
  margin-top: 11px;
}

.search {
  display: flex;
  align-items: center;
  width: 208px;
  height: 21px;
  margin: 7px 5px;
  padding: 0 3px 0 1px;
  border: 1px solid var(--soft-line);
  background: #fff;
}

.search input {
  flex: 1;
  min-width: 0;
  border: 0;
  background: none;
}

::placeholder {
  color: #555;
  opacity: 1;
}

.dots::placeholder {
  color: #5580bb;
}

.search svg {
  width: 12px;
  height: 12px;
}

.mid {
  margin-left: 11px;
}

.low {
  margin: 13px 0 6px 4px;
}

.tabs {
  display: flex;
  align-items: flex-end;
  gap: 1px;
  padding-left: 7px;
}

.tabs button {
  width: 127px;
  height: 21px;
  border: 1px solid #8ba3cb;
  border-bottom: 0;
  border-radius: 2px 2px 0 0;
  background: linear-gradient(#dbe7f8, #c3d6ef 45%, #a9c6ec 50%, #c4dbf8);
  color: #1f4b9a;
}

.tabs .on {
  height: 24px;
  margin-bottom: -1px;
  position: relative;
  background: linear-gradient(#e2eefc, #f3f8ff);
  color: #000;
}

.filters {
  display: flex;
  gap: 5px;
  margin-left: 4px;
  padding: 8px 0 8px 7px;
  border: 1px solid #8ba3cb;
  border-right: 0;
  background: #f3f8ff;
  color: var(--label);
}

.fields {
  display: grid;
  align-items: center;
  align-content: start;
  row-gap: 6px;
  flex: none;
  white-space: nowrap;
}

.f1 {
  grid-template-columns: 70px 220px;
}

.f2 {
  grid-template-columns: 56px 200px;
}

.f3 {
  grid-template-columns: 65px 200px;
  grid-auto-rows: 20px;
  row-gap: 0;
}

.field {
  display: flex;
  align-items: center;
  gap: 4px;
  height: 21px;
  padding: 0 2px 0 1px;
  border: 1px solid var(--soft-line);
  background: #fff;
  color: #000;
}

.field input, .field select {
  flex: 1;
  min-width: 0;
  border: 0;
  background: none;
}

.field select {
  appearance: none;
}

.field svg {
  width: 14px;
  height: 13px;
}

.field:has(select)::after {
  content: "";
  margin-right: 3px;
  border: solid transparent;
  border-width: 3px 3px 0;
  border-top-color: #3f78c4;
}

.opt {
  grid-column: 2;
  display: flex;
  align-items: center;
  gap: 5px;
  padding-left: 1px;
}

.opt input {
  border-color: var(--soft-line);
  outline: 1px solid #fff;
  outline-offset: -2px;
  background: linear-gradient(135deg, #c9ced6, #f4f5f7);
}

.mode {
  flex: 1;
  min-width: 90px;
  margin-left: 1px;
  border: 1px solid var(--line);
  border-right: 0;
  background: #e2eeff;
}

.mode legend {
  width: 100%;
  padding: 1px 10px 0;
  line-height: 17px;
  white-space: nowrap;
}

.mode label {
  display: flex;
  align-items: center;
  gap: 5px;
  height: 26px;
  padding-left: 8px;
  white-space: nowrap;
}

.mode legend + label {
  clear: both;
  margin-top: 20px;
}

.mode input {
  appearance: none;
  width: 12px;
  height: 12px;
  border: 1px solid #a9bad2;
  border-radius: 50%;
  background: radial-gradient(#e4e9f0 40%, #fff 45%);
}

.mode input:checked {
  background: radial-gradient(#2e7fa8 10%, #12365c 40%, #fff 50%);
}

.low-scroll {
  height: 16px;
  margin-top: 8px;
}

.low-scroll .thumb {
  flex: 771;
  margin: 0;
}

.low-scroll .rest {
  flex: 127;
}

.buttons {
  display: flex;
  justify-content: flex-end;
  padding: 3px 23px 3px 0;
}

.big {
  display: flex;
  align-items: center;
  gap: 4px;
  height: 34px;
  padding-left: 10px;
  border: 1px solid #7f9dc6;
  border-radius: 2px;
  background: linear-gradient(#eef4fd, #e2ecf9 28%, #d0e0f3 30%, #e0ecfc);
  white-space: nowrap;
}

.big svg {
  width: 30px;
  height: 28px;
}

.stock {
  width: 193px;
}

.ok {
  width: 105px;
  margin: 0 28px 0 8px;
  padding-left: 18px;
}

.cancel {
  width: 105px;
  padding-left: 17px;
}

/* step markers float over the windows */
.mark {
  position: absolute;
  background: #ff0;
  mix-blend-mode: multiply;
  pointer-events: none;
}

.mark-1 {
  top: 85px;
  left: 10px;
  width: 134px;
  height: 19px;
}

.mark-2 {
  top: 226px;
  left: 8px;
  width: 186px;
  height: 24px;
}

.mark-3 {
  top: 190px;
  left: 378px;
  right: 147px;
  height: 21px;
}

.mark-4 {
  top: 300px;
  left: 375px;
  width: 23px;
  height: 84px;
}

.mark-5 {
  top: 653px;
  right: 306px;
  width: 103px;
  height: 32px;
}

.step {
  position: absolute;
  width: 29px;
  height: 29px;
  border-radius: 50%;
  background: #f00;
  color: #fff;
  font: 17px/29px "Open Sans", sans-serif;
  text-align: center;
}

.step-1 {
  top: 81px;
  left: 116px;
}

.step-2 {
  top: 219px;
  left: 2px;
}

.step-3 {
  top: 184px;
  left: 351px;
}

.step-4 {
  top: 287px;
  left: 351px;
}

.step-5 {
  top: 650px;
  right: 385px;
}
```
